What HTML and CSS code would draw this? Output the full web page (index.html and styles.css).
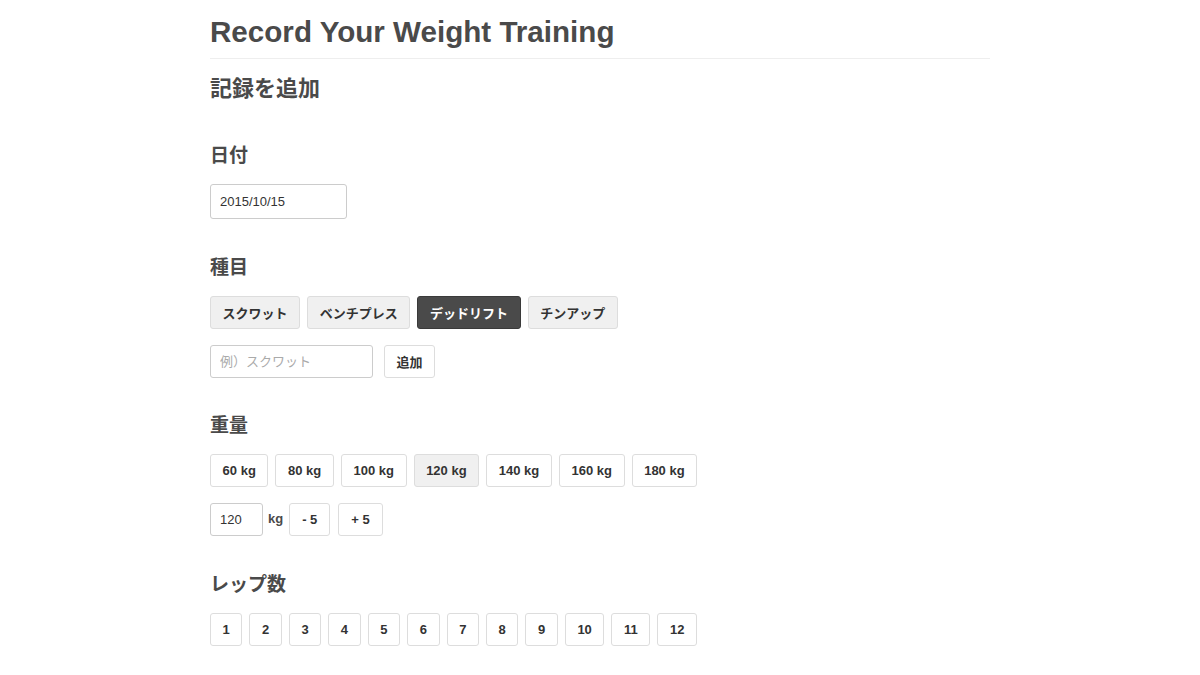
FILE: index.html
```html
<!DOCTYPE html>
<html lang="ja">
<head>
<meta charset="utf-8">
<title>Record Your Weight Training</title>
<link rel="stylesheet" href="styles.css">
</head>
<body>
<div class="container">
  <h1 class="title">Record Your Weight Training</h1>
  <h2 class="subtitle">記録を追加</h2>

  <section class="field">
    <h3 class="label">日付</h3>
    <input class="input date" type="text" value="2015/10/15">
  </section>

  <section class="field">
    <h3 class="label">種目</h3>
    <div class="row">
      <button class="btn gray">スクワット</button>
      <button class="btn gray">ベンチプレス</button>
      <button class="btn dark">デッドリフト</button>
      <button class="btn gray">チンアップ</button>
    </div>
    <div class="row row-add">
      <input class="input name" type="text" placeholder="例）スクワット">
      <button class="btn plain add">追加</button>
    </div>
  </section>

  <section class="field field-weight">
    <h3 class="label">重量</h3>
    <div class="row">
      <button class="btn plain">60 kg</button>
      <button class="btn plain">80 kg</button>
      <button class="btn plain">100 kg</button>
      <button class="btn gray">120 kg</button>
      <button class="btn plain">140 kg</button>
      <button class="btn plain">160 kg</button>
      <button class="btn plain">180 kg</button>
    </div>
    <div class="row row-weight">
      <input class="input weight" type="text" value="120">
      <span class="unit">kg</span>
      <button class="btn plain step">- 5</button>
      <button class="btn plain step plus">+ 5</button>
    </div>
  </section>

  <section class="field">
    <h3 class="label">レップ数</h3>
    <div class="row">
      <button class="btn plain num">1</button>
      <button class="btn plain num">2</button>
      <button class="btn plain num">3</button>
      <button class="btn plain num">4</button>
      <button class="btn plain num">5</button>
      <button class="btn plain num">6</button>
      <button class="btn plain num">7</button>
      <button class="btn plain num">8</button>
      <button class="btn plain num">9</button>
      <button class="btn plain num">10</button>
      <button class="btn plain num">11</button>
      <button class="btn plain num">12</button>
    </div>
  </section>
</div>
</body>
</html>
```
FILE: styles.css
```css
* { box-sizing: border-box; }
html, body { margin: 0; padding: 0; background: #fff; }
body {
  font-family: "Liberation Sans", "Noto Sans CJK JP", sans-serif;
  color: #4a4a4a;
}
.container {
  width: 780px;
  margin: 0 auto;
}
.title {
  margin: 0;
  padding-top: 15px;
  padding-bottom: 9px;
  font-size: 29.6px;
  line-height: 34px;
  font-weight: bold;
  border-bottom: 1px solid #eeeeee;
}
.subtitle {
  margin: 15px 0 0;
  font-size: 22px;
  line-height: 30px;
  font-weight: bold;
}
.field { margin-top: 39px; }
.field + .field { margin-top: 36px; }
.field + .field-weight { margin-top: 35px; }
.label {
  margin: 0 0 15px;
  font-size: 19px;
  line-height: 26px;
  font-weight: bold;
}
.row {
  display: flex;
  align-items: center;
  gap: 7px;
}
.row-add, .row-weight { margin-top: 16px; }
.row-add { gap: 11px; }
.row-weight { gap: 0; }
.input {
  height: 35px;
  border: 1px solid #cccccc;
  border-radius: 3px;
  padding: 0 9px;
  font-family: "Liberation Sans", "Noto Sans CJK JP", sans-serif;
  font-size: 13px;
  color: #333;
  background: #fff;
  outline: none;
}
.input::placeholder { color: #aaaaaa; }
.date { width: 137px; }
.name { width: 163px; height: 33px; }
.weight { width: 53px; height: 33px; }
.unit {
  font-size: 13px;
  font-weight: bold;
  color: #4a4a4a;
  margin: -3px 6px 0 5px;
}
.btn {
  height: 33px;
  padding: 0 11.6px;
  border: 1px solid #dddddd;
  border-radius: 3px;
  font-family: "Liberation Sans", "Noto Sans CJK JP", sans-serif;
  font-size: 13px;
  font-weight: bold;
  color: #333;
  background: #fff;
  cursor: pointer;
}
.btn.gray { background: #f0f0f0; }
.btn.dark { background: #4a4a4a; color: #fff; border-color: #3a3a3a; }
.step { padding: 0 12px; }
.plus { margin-left: 8px; }
```
